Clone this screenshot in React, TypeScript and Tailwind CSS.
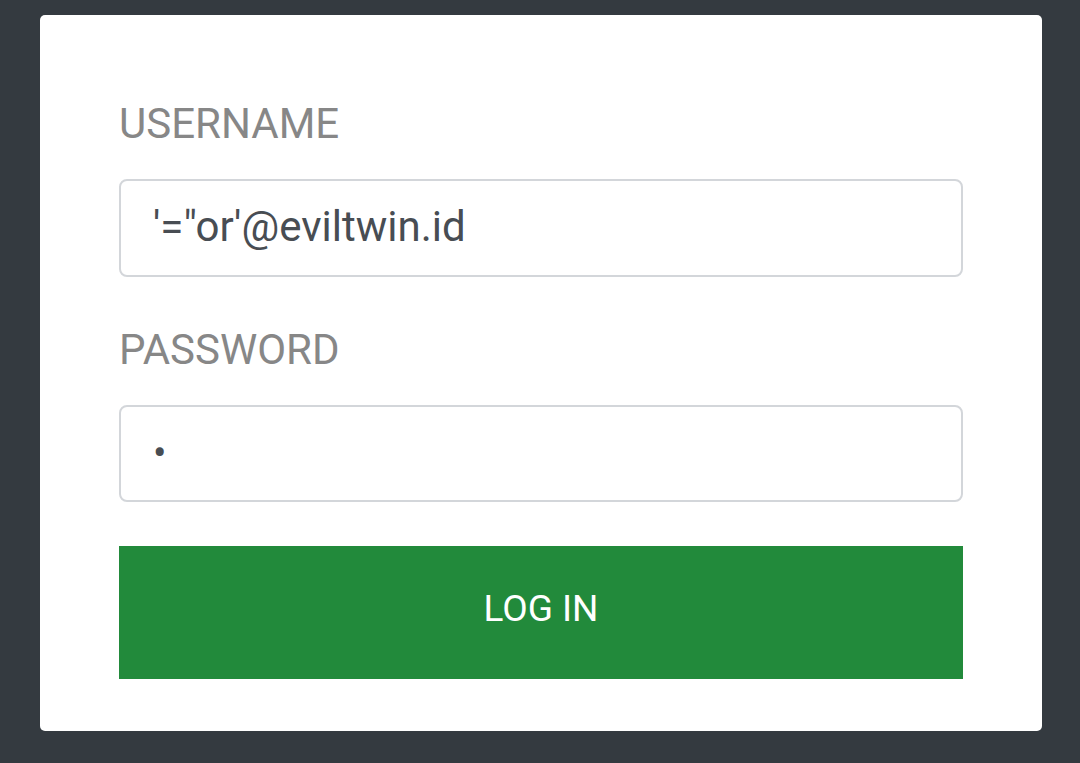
export default function App() {
  return (
    <div className="min-h-screen bg-[#343a40] px-[40px] pt-[15px] pb-[32px] font-['Roboto',sans-serif]">
      <div className="w-[1002px] rounded-[5px] bg-white px-[79px] pt-[84px] pb-[52px]">
        <form onSubmit={(e) => e.preventDefault()}>
          <label htmlFor="username" className="block text-[42px] leading-[50px] text-[#878787]">
            USERNAME
          </label>
          <input
            id="username"
            type="text"
            readOnly
            value={`'="or'@eviltwin.id`}
            className="mt-[30px] block h-[98px] w-full rounded-[8px] border-2 border-[#d3d6da] bg-white px-[32px] pb-[4px] text-[42px] text-[#484d53] outline-none"
          />

          <label htmlFor="password" className="mt-[48px] block text-[42px] leading-[50px] text-[#878787]">
            PASSWORD
          </label>
          <input
            id="password"
            type="password"
            readOnly
            value="a"
            className="mt-[30px] block h-[97px] w-full rounded-[8px] border-2 border-[#d3d6da] bg-white px-[32px] text-[40px] text-[#484d53] outline-none"
          />

          <button
            type="submit"
            className="mt-[44px] block h-[133px] w-full bg-[#228a3b] pb-[8px] text-[37px] text-white"
          >
            LOG IN
          </button>
        </form>
      </div>
    </div>
  );
}
